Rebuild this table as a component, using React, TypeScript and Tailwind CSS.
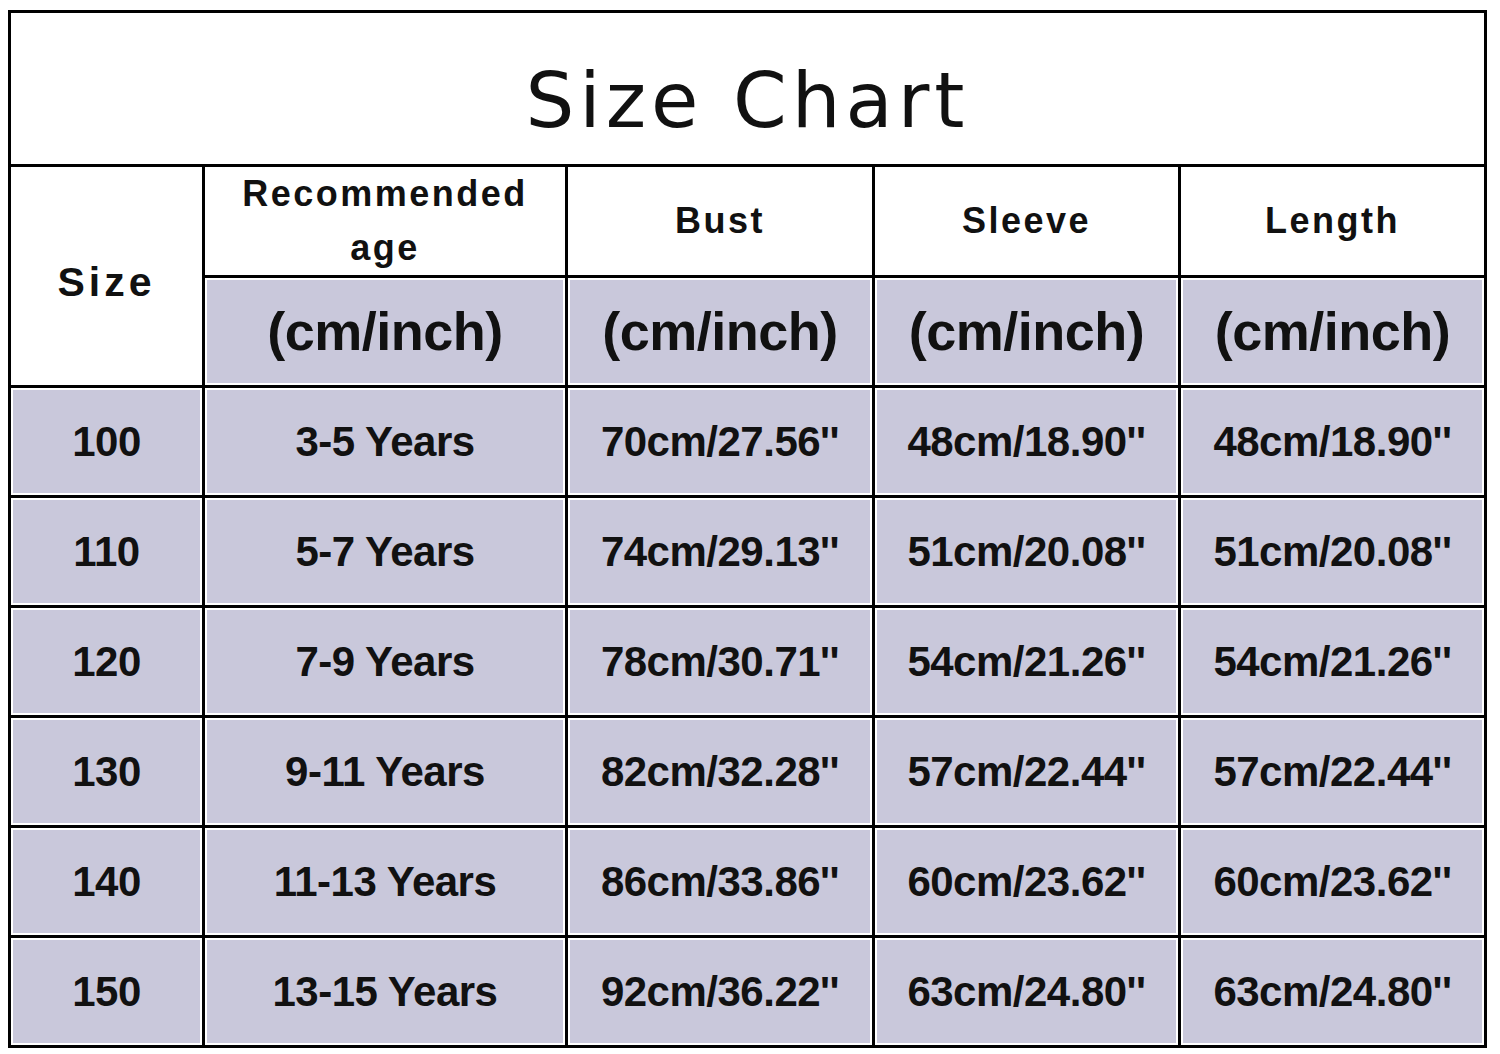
const rows = [
  ['100', '3-5 Years', '70cm/27.56\'\'', '48cm/18.90\'\'', '48cm/18.90\'\''],
  ['110', '5-7 Years', '74cm/29.13\'\'', '51cm/20.08\'\'', '51cm/20.08\'\''],
  ['120', '7-9 Years', '78cm/30.71\'\'', '54cm/21.26\'\'', '54cm/21.26\'\''],
  ['130', '9-11 Years', '82cm/32.28\'\'', '57cm/22.44\'\'', '57cm/22.44\'\''],
  ['140', '11-13 Years', '86cm/33.86\'\'', '60cm/23.62\'\'', '60cm/23.62\'\''],
  ['150', '13-15 Years', '92cm/36.22\'\'', '63cm/24.80\'\'', '63cm/24.80\'\''],
];

function GrayCell({ children, big }: { children: React.ReactNode; big?: boolean }) {
  return (
    <div className="bg-white p-[2px]">
      <div
        className={
          big
            ? 'h-full bg-[#c9c8db] flex items-center justify-center text-[54px] font-bold tracking-[-0.5px] text-[#111]'
            : 'h-full bg-[#c9c8db] flex items-center justify-center text-[42px] font-bold tracking-[-0.5px] text-[#111]'
        }
      >
        {children}
      </div>
    </div>
  );
}

function HeadCell({ children }: { children: React.ReactNode }) {
  return (
    <div className="bg-white flex items-center justify-center text-center text-[36px] leading-[54px] font-bold tracking-[2.5px] text-[#111]">
      {children}
    </div>
  );
}

export default function App() {
  return (
    <div className="min-h-screen bg-white pt-[10px] pl-[8px] font-['Liberation_Sans',Arial,sans-serif]">
      <div className="w-[1479px] bg-black p-[3px] grid grid-cols-[191px_360px_304px_303px_303px] grid-rows-[151px_108px_107px_107px_107px_107px_107px_107px_107px] gap-[3px]">
        {/* Title */}
        <div className="col-span-5 bg-white flex items-center justify-center pt-[24px]">
          <span className="font-['DejaVu_Sans',sans-serif] text-[77px] font-normal tracking-[5px] text-[#111]">
            Size Chart
          </span>
        </div>

        {/* Header */}
        <div className="row-span-2 bg-white flex items-center justify-center pt-[14px] text-[41px] font-bold tracking-[4px] text-[#111]">
          Size
        </div>
        <HeadCell>
          Recommended
          <br />
          age
        </HeadCell>
        <HeadCell>Bust</HeadCell>
        <HeadCell>Sleeve</HeadCell>
        <HeadCell>Length</HeadCell>
        <GrayCell big>(cm/inch)</GrayCell>
        <GrayCell big>(cm/inch)</GrayCell>
        <GrayCell big>(cm/inch)</GrayCell>
        <GrayCell big>(cm/inch)</GrayCell>

        {/* Data rows */}
        {rows.map((row) =>
          row.map((val, j) => <GrayCell key={row[0] + '-' + j}>{val}</GrayCell>)
        )}
      </div>
    </div>
  );
}
